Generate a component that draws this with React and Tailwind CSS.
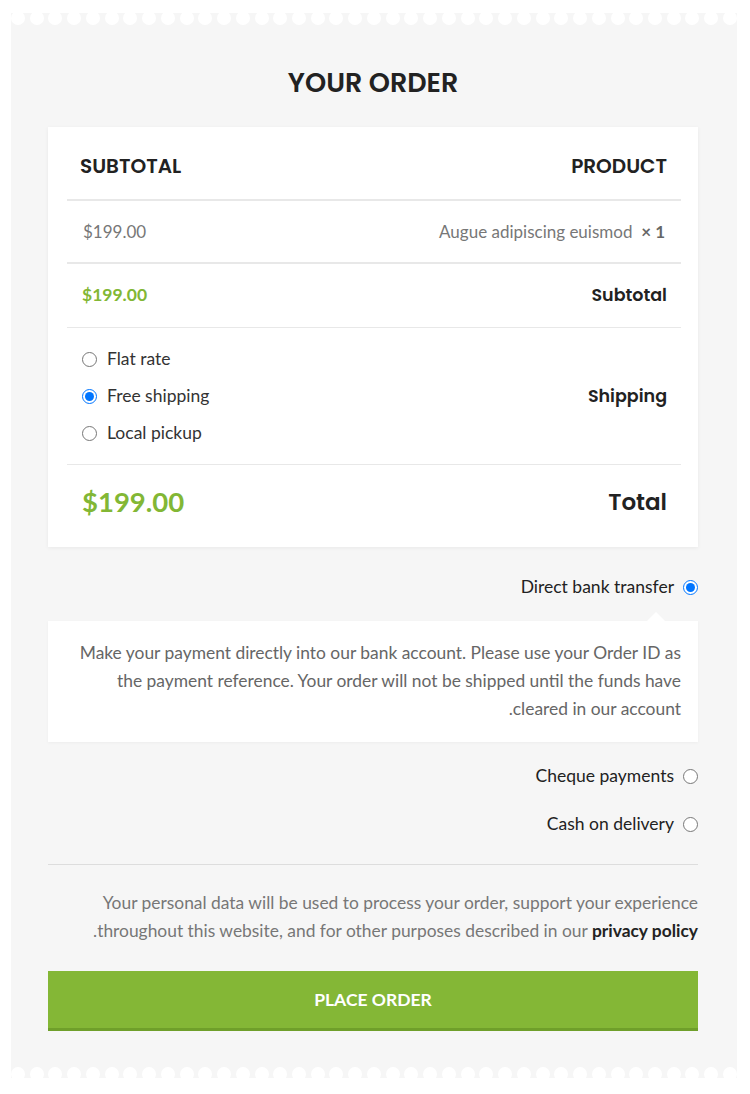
import React from 'react'

const heading = "font-['Poppins','Inter',sans-serif]"
const body = "font-['Lato','Liberation_Sans',sans-serif]"

function Scallops({ position }) {
  const dots = Array.from({ length: 39 })
  return (
    <div className={`absolute left-0 right-0 flex justify-between overflow-hidden ${position}`}>
      {dots.map((_, i) => (
        <span key={i} className="block h-[14px] w-[14px] shrink-0 rounded-full bg-white" />
      ))}
    </div>
  )
}

function Radio({ checked }) {
  return (
    <input
      type="radio"
      checked={!!checked}
      readOnly
      className="m-0 h-[15px] w-[15px] shrink-0"
    />
  )
}

export default function App() {
  return (
    <div className={`min-h-screen bg-white pt-[13px] ${body}`}>
      <div className="relative ml-[11px] w-[726px] bg-[#f6f6f6] pl-[37px] pr-[39px] pt-[52px] pb-[47px]">
        <Scallops position="-top-[2px]" />
        <Scallops position="-bottom-[3px]" />

        <h3 className={`text-center text-[27px] font-semibold leading-[36px] text-[#222] ${heading}`}>YOUR ORDER</h3>

        {/* Order table */}
        <div className="mt-[26px] bg-white pl-[19px] pr-[17px] pt-[6px] shadow-[0_1px_4px_rgba(0,0,0,0.06)]">
          <div className={`flex h-[68px] items-center justify-between border-b-2 border-[#e8e8e8] pl-[13px] pr-[14px] text-[20px] font-semibold text-[#222] ${heading}`}>
            <span>SUBTOTAL</span>
            <span>PRODUCT</span>
          </div>
          <div className="flex h-[63px] items-center justify-between border-b-2 border-[#e8e8e8] pl-[16px] pr-[16px] text-[17px] text-[#777]">
            <span>$199.00</span>
            <span>
              Augue adipiscing euismod&nbsp; <strong className="font-bold text-[#666]">× 1</strong>
            </span>
          </div>
          <div className="flex h-[64px] items-center justify-between border-b border-[#e8e8e8] pl-[15px] pr-[14px]">
            <span className="text-[17.5px] font-bold text-[#82b735]">$199.00</span>
            <span className={`text-[17.5px] font-semibold text-[#222] ${heading}`}>Subtotal</span>
          </div>
          <div className="flex h-[137px] items-center justify-between border-b border-[#e8e8e8] pl-[15px] pr-[14px]">
            <ul className="flex flex-col gap-[13px] text-[17.5px] text-[#333]">
              <li className="flex h-[24px] items-center gap-[10px]"><Radio />Flat rate</li>
              <li className="flex h-[24px] items-center gap-[10px]"><Radio checked />Free shipping</li>
              <li className="flex h-[24px] items-center gap-[10px]"><Radio />Local pickup</li>
            </ul>
            <span className={`text-[17.5px] font-semibold text-[#222] ${heading}`}>Shipping</span>
          </div>
          <div className="flex h-[82px] items-center justify-between pb-[8px] pl-[15px] pr-[14px]">
            <span className="text-[27.5px] font-bold text-[#82b735]">$199.00</span>
            <span className={`text-[23px] font-semibold text-[#222] ${heading}`}>Total</span>
          </div>
        </div>

        {/* Payment methods */}
        <div className="mt-[28px] flex h-[24px] items-center justify-end gap-[9px] text-[17.5px] text-[#222]">
          <span>Direct bank transfer</span>
          <Radio checked />
        </div>
        <div className="relative mt-[22px] bg-white pb-[19px] pl-[17px] pr-[17px] pt-[18px] shadow-[0_1px_3px_rgba(0,0,0,0.04)]">
          <span className="absolute -top-[9px] right-[33px] h-0 w-0 border-x-[9px] border-b-[9px] border-x-transparent border-b-white" />
          <p dir="rtl" className="text-[17.4px] leading-[28px] text-[#666]">
            Make your payment directly into our bank account. Please use your Order ID as the payment reference. Your order will not be shipped until the funds have cleared in our account.
          </p>
        </div>
        <div className="mt-[22px] flex h-[24px] items-center justify-end gap-[9px] text-[17.5px] text-[#222]">
          <span>Cheque payments</span>
          <Radio />
        </div>
        <div className="mt-[24px] flex h-[24px] items-center justify-end gap-[9px] text-[17.5px] text-[#222]">
          <span>Cash on delivery</span>
          <Radio />
        </div>

        <div className="mt-[28px] border-t border-[#ddd]" />

        <p dir="rtl" className="mt-[24px] text-[17.4px] leading-[28px] text-[#777]">
          Your personal data will be used to process your order, support your experience throughout this website, and for other purposes described in our <a className="font-bold text-[#222]">privacy policy</a>.
        </p>

        <button className="mt-[26px] flex h-[60px] w-full items-center justify-center border-b-[3px] border-[#6f9f2a] bg-[#84b736] pt-[2px] text-[17.5px] font-bold text-white">
          PLACE ORDER
        </button>
      </div>
    </div>
  )
}
